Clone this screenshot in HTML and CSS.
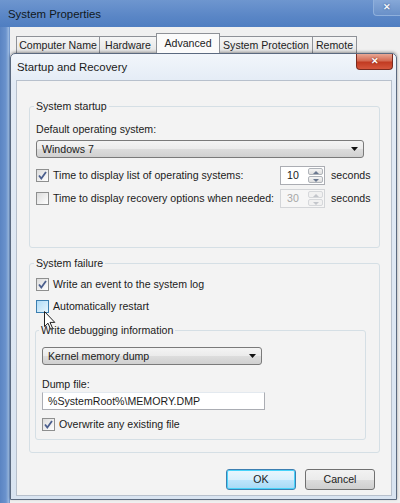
FILE: index.html
```html
<!DOCTYPE html>
<html lang="en">

<head>
    <meta charset="UTF-8">
    <meta name="viewport" content="width=device-width, initial-scale=1.0">
    <title>Startup and Recovery</title>
    <link rel="stylesheet" href="styles.css">
</head>

<body>
    <!-- System Properties window (behind) -->
    <div class="sysprops">
        <div class="sysprops-title">
            <span>System Properties</span>
            <div class="close-btn">&#x2715;</div>
        </div>
        <div class="sysprops-body">
            <div class="tabs">
                <div class="tab tab-computer">Computer Name</div>
                <div class="tab tab-hardware">Hardware</div>
                <div class="tab tab-advanced active">Advanced</div>
                <div class="tab tab-protection">System Protection</div>
                <div class="tab tab-remote">Remote</div>
            </div>
        </div>
    </div>

    <!-- Startup and Recovery dialog -->
    <div class="dialog">
        <div class="dialog-title">
            <span>Startup and Recovery</span>
            <div class="close-red">&#x2715;</div>
        </div>
        <div class="dialog-body">
            <fieldset class="group">
                <legend>System startup</legend>
                <div class="label first-label">Default operating system:</div>
                <div class="combo combo-wide">
                    <span>Windows 7</span>
                    <svg class="combo-arrow" width="7" height="4" viewBox="0 0 7 4"><path d="M0 0 H7 L3.5 4 Z" fill="#111"/></svg>
                </div>
                <div class="row row-first">
                    <span class="check checked">
                        <svg width="11" height="11" viewBox="0 0 11 11"><path d="M2 5.5 L4.3 8.5 L9 2" fill="none" stroke="#4b5f8e" stroke-width="1.8"/></svg>
                    </span>
                    <span class="row-text">Time to display list of operating systems:</span>
                    <div class="spin">
                        <span class="spin-value">10</span>
                        <span class="spin-btns">
                            <span class="spin-up"></span>
                            <span class="spin-down"></span>
                        </span>
                    </div>
                    <span class="seconds">seconds</span>
                </div>
                <div class="row row-second">
                    <span class="check"></span>
                    <span class="row-text">Time to display recovery options when needed:</span>
                    <div class="spin disabled">
                        <span class="spin-value">30</span>
                        <span class="spin-btns">
                            <span class="spin-up"></span>
                            <span class="spin-down"></span>
                        </span>
                    </div>
                    <span class="seconds">seconds</span>
                </div>
            </fieldset>

            <fieldset class="group group-failure">
                <legend>System failure</legend>
                <div class="row row-log">
                    <span class="check checked">
                        <svg width="11" height="11" viewBox="0 0 11 11"><path d="M2 5.5 L4.3 8.5 L9 2" fill="none" stroke="#4b5f8e" stroke-width="1.8"/></svg>
                    </span>
                    <span class="row-text">Write an event to the system log</span>
                </div>
                <div class="row row-restart">
                    <span class="check hover"></span>
                    <span class="row-text">Automatically restart</span>
                </div>

                <fieldset class="group group-debug">
                    <legend>Write debugging information</legend>
                    <div class="combo combo-dump">
                        <span>Kernel memory dump</span>
                        <svg class="combo-arrow" width="7" height="4" viewBox="0 0 7 4"><path d="M0 0 H7 L3.5 4 Z" fill="#111"/></svg>
                    </div>
                    <div class="label dump-label">Dump file:</div>
                    <div class="textbox">%SystemRoot%\MEMORY.DMP</div>
                    <div class="row row-overwrite">
                        <span class="check checked">
                            <svg width="11" height="11" viewBox="0 0 11 11"><path d="M2 5.5 L4.3 8.5 L9 2" fill="none" stroke="#4b5f8e" stroke-width="1.8"/></svg>
                        </span>
                        <span class="row-text">Overwrite any existing file</span>
                    </div>
                </fieldset>
            </fieldset>

            <div class="buttons">
                <div class="btn btn-default">OK</div>
                <div class="btn">Cancel</div>
            </div>
        </div>
    </div>

    <!-- mouse pointer -->
    <svg class="cursor" width="12" height="19" viewBox="0 0 12 19">
        <path d="M0.5 0.5 L0.5 15.5 L4 12.2 L6.6 18.2 L8.6 17.3 L6 11.4 L10.8 11.4 Z" fill="#fff" stroke="#222" stroke-width="1"/>
    </svg>
</body>
</html>
```

FILE: styles.css
```css
body {
    margin: 0;
    width: 400px;
    height: 503px;
    overflow: hidden;
    position: relative;
    font-family: "Liberation Sans", Arial, sans-serif;
    font-size: 10.6px;
    color: #1b1b1b;
    background-color: #4f79b8;
}

/* outer window */
.sysprops {
    height: 503px;
    background: linear-gradient(to right, #5a84c2 0, #6b93cd 6px, #9fbde3 9px, #4f79b8 10px);
}

.sysprops-title {
    height: 27px;
    display: flex;
    align-items: center;
    padding-left: 8px;
    font-size: 11.4px;
    color: #101820;
    background: linear-gradient(to bottom, #6e96cf, #5a86c6 60%, #4f7ec1);
    position: relative;
}

.close-btn {
    position: absolute;
    top: 0;
    right: 0;
    width: 27px;
    height: 16px;
    box-sizing: border-box;
    border: 1px solid #8fb0dc;
    border-top: none;
    border-right: none;
    border-radius: 0 0 0 4px;
    background: linear-gradient(to bottom, #86a8d8, #6990c8);
    color: #f4f8fc;
    font-size: 9px;
    font-weight: bold;
    text-align: center;
    line-height: 15px;
    text-shadow: 0 0 2px #2d4f82;
}

.sysprops-body {
    margin-left: 10px;
    height: 476px;
    padding-top: 6px;
    background-color: #f0f0f0;
    box-sizing: border-box;
}

.tabs {
    display: flex;
    align-items: flex-end;
    height: 20px;
    padding-left: 6px;
}

.tab {
    height: 17px;
    line-height: 16px;
    text-align: center;
    box-sizing: border-box;
    border: 1px solid #8e9197;
    border-bottom: none;
    margin-right: -1px;
    background: linear-gradient(to bottom, #f6f6f6, #e4e4e4);
    color: #222;
}

.tab.active {
    height: 20px;
    line-height: 18px;
    background: #fbfbfb;
    position: relative;
    z-index: 1;
}

.tab-computer { width: 84px; }
.tab-hardware { width: 58px; }
.tab-advanced { width: 64px; }
.tab-protection { width: 94px; }
.tab-remote { width: 45px; }

/* startup and recovery dialog */
.dialog {
    position: absolute;
    left: 10px;
    top: 53px;
    width: 387px;
    height: 447px;
    box-sizing: border-box;
    border: 1px solid #5b6a80;
    border-radius: 5px 5px 0 0;
    background: linear-gradient(to bottom, #f2f6fb, #e3ebf5 30px, #d9e4f1);
    box-shadow: 0 -1px 3px rgba(0, 0, 0, 0.35);
}

.dialog-title {
    height: 26px;
    display: flex;
    align-items: center;
    padding-left: 6px;
    font-size: 11.4px;
    color: #1a1a1a;
    position: relative;
}

.close-red {
    position: absolute;
    top: 0;
    right: 3px;
    width: 37px;
    height: 16px;
    box-sizing: border-box;
    border: 1px solid #7a2b1f;
    border-top: none;
    border-radius: 0 0 4px 4px;
    background: linear-gradient(to bottom, #e9a794, #d46a52 45%, #c23b22 55%, #d5563c);
    color: #fff;
    font-size: 9px;
    font-weight: bold;
    text-align: center;
    line-height: 15px;
    text-shadow: 0 0 2px #6a1a10;
}

.dialog-body {
    margin: 0 4px 0 5px;
    height: 416px;
    box-sizing: border-box;
    border: 1px solid #b7c0cc;
    padding: 19px 11px 0 12px;
    background-color: #f3f3f3;
}

/* group boxes */
.group {
    margin: 0;
    padding: 0 6px 40px 6px;
    border: 1px solid #d5dfe5;
    border-radius: 3px;
}

.group legend {
    padding: 0 2px;
    margin-left: -2px;
    line-height: 13px;
}

.group-failure {
    margin-top: 9px;
    padding-bottom: 12px;
}

.group-debug {
    margin: 10px 7px 0 -1px;
    padding: 0 6px 7px 6px;
}

.group-debug legend {
    margin-left: -3px;
}

.label {
    line-height: 13px;
}

.first-label {
    margin-top: 10px;
}

.dump-label {
    margin-top: 13px;
}

/* combo boxes */
.combo {
    height: 18px;
    box-sizing: border-box;
    border: 1px solid #7a7a7a;
    border-radius: 3px;
    background: linear-gradient(to bottom, #f4f4f4, #ebebeb 50%, #dddddd 51%, #d0d0d0);
    display: flex;
    align-items: center;
    justify-content: space-between;
    padding: 0 5px 0 5px;
    margin-top: 4px;
}

.combo-wide {
    width: 328px;
}

.combo-dump {
    width: 220px;
    margin-top: 10px;
}

.textbox {
    width: 223px;
    height: 18px;
    box-sizing: border-box;
    margin-top: 1px;
    border: 1px solid #abadb3;
    border-top-color: #e3e9ef;
    background-color: #fff;
    padding-left: 5px;
    line-height: 16px;
}

/* check rows */
.row {
    display: flex;
    align-items: center;
    height: 16px;
}

.row-first {
    margin-top: 8px;
    height: 18px;
}

.row-second {
    margin-top: 5px;
    height: 18px;
}

.row-log {
    margin-top: 6px;
}

.row-restart {
    margin-top: 6px;
}

.row-overwrite {
    margin-top: 6px;
}

.row-text {
    margin-left: 4px;
    white-space: nowrap;
}

.row-first .row-text,
.row-second .row-text {
    flex: 1;
}

.check {
    width: 13px;
    height: 13px;
    box-sizing: border-box;
    border: 1px solid #8e8f8f;
    background: linear-gradient(135deg, #dcdcdc, #ffffff);
    display: flex;
    align-items: center;
    justify-content: center;
    flex-shrink: 0;
}

.check.hover {
    border-color: #3c7fb1;
    background: linear-gradient(135deg, #b1dcf7, #e6f5fd);
}

/* spinners */
.spin {
    width: 45px;
    height: 19px;
    box-sizing: border-box;
    border: 1px solid #abadb3;
    background-color: #fff;
    display: flex;
}

.spin-value {
    flex: 1;
    padding-left: 6px;
    line-height: 17px;
}

.spin-btns {
    width: 17px;
    display: flex;
    flex-direction: column;
    padding: 1px;
    gap: 1px;
    box-sizing: border-box;
}

.spin-up,
.spin-down {
    flex: 1;
    border: 1px solid #b0b4ba;
    border-radius: 2px;
    background: linear-gradient(to bottom, #f5f5f5, #dedede);
    position: relative;
}

.spin-up::after,
.spin-down::after {
    content: "";
    position: absolute;
    left: 4px;
    top: 2px;
    border-left: 3px solid transparent;
    border-right: 3px solid transparent;
}

.spin-up::after {
    border-bottom: 3px solid #6a7890;
}

.spin-down::after {
    border-top: 3px solid #6a7890;
}

.spin.disabled {
    border-color: #d3d5d8;
    background-color: #f6f6f6;
    color: #a6a6a6;
}

.spin.disabled .spin-up,
.spin.disabled .spin-down {
    border-color: #d6d8db;
    background: #f1f1f1;
}

.spin.disabled .spin-up::after {
    border-bottom-color: #c3c6cb;
}

.spin.disabled .spin-down::after {
    border-top-color: #c3c6cb;
}

.seconds {
    width: 42px;
    margin-left: 6px;
}

/* buttons */
.buttons {
    display: flex;
    justify-content: flex-end;
    gap: 9px;
    margin-top: 16px;
    padding-right: 5px;
}

.btn {
    width: 70px;
    height: 21px;
    box-sizing: border-box;
    border: 1px solid #707070;
    border-radius: 3px;
    background: linear-gradient(to bottom, #f2f2f2, #ebebeb 50%, #dddddd 51%, #cfcfcf);
    text-align: center;
    line-height: 19px;
}

.btn-default {
    border-color: #3c7fb1;
    box-shadow: inset 0 0 0 1px #48d3fa;
    background: linear-gradient(to bottom, #eaf6fd, #d9f0fc 50%, #bee6fd 51%, #a7d9f5);
}

.cursor {
    position: absolute;
    left: 44px;
    top: 311px;
}
```
